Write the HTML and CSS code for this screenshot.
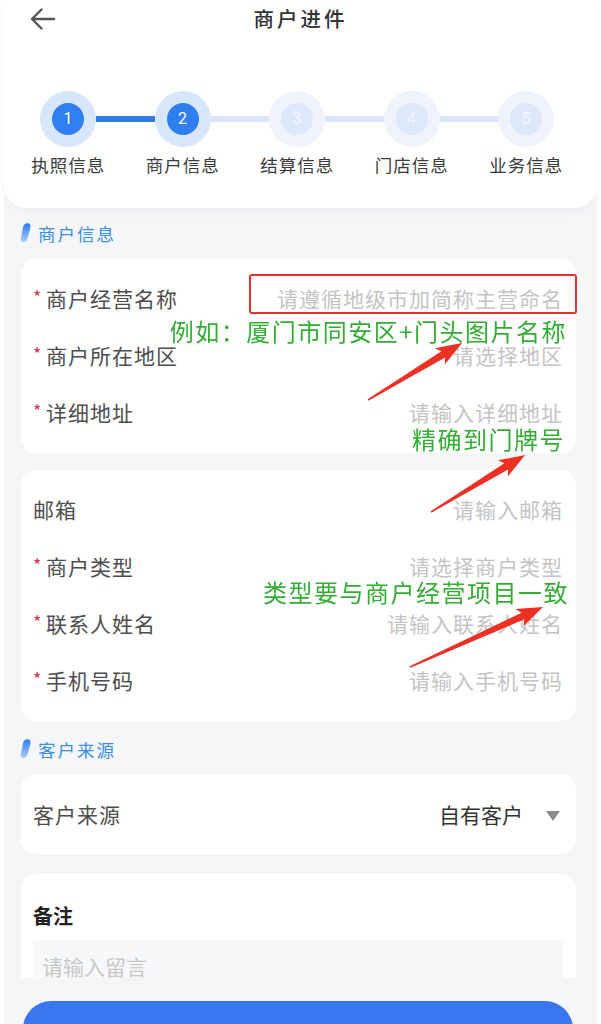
FILE: index.html
```html
<!DOCTYPE html>
<html lang="zh-CN">
<head>
<meta charset="utf-8">
<title>商户进件</title>
<link rel="stylesheet" href="styles.css">
</head>
<body>
<div class="page">
  <header class="header">
    <div class="topbar">
      <svg class="back" width="26" height="22" viewBox="0 0 26 22"><path d="M2 11H24M11.5 1.5L2 11L11.5 20.5" fill="none" stroke="#555" stroke-width="2.4" stroke-linecap="round" stroke-linejoin="round"/></svg>
      <div class="title">商户进件</div>
      <span></span>
    </div>
    <div class="steps">
      <div class="dot"><span>1</span></div>
      <div class="link on"></div>
      <div class="dot"><span>2</span></div>
      <div class="link"></div>
      <div class="dot off"><span>3</span></div>
      <div class="link"></div>
      <div class="dot off"><span>4</span></div>
      <div class="link"></div>
      <div class="dot off"><span>5</span></div>
    </div>
    <div class="labels">
      <span>执照信息</span><span>商户信息</span><span>结算信息</span><span>门店信息</span><span>业务信息</span>
    </div>
  </header>

  <main class="content">
    <div class="sec">
      <svg class="leaf" width="11" height="20" viewBox="0 0 11 20"><defs><linearGradient id="lg1" x1="0" y1="0" x2="0" y2="1"><stop offset="0" stop-color="#2f7cf0"/><stop offset="1" stop-color="#a9cbfb"/></linearGradient></defs><path d="M7.8 0.3C10.4 0.3 10.9 2.6 10.2 5.4L7.2 16.6C6.4 19.6 0.2 20.2 0.7 16.4L2.8 5C3.4 1.6 5.3 0.3 7.8 0.3Z" fill="url(#lg1)"/></svg>
      <span>商户信息</span>
    </div>
    <section class="card first">
      <div class="row"><span class="lab"><i>*</i>商户经营名称</span><span class="ph">请遵循地级市加简称主营命名</span></div>
      <div class="row"><span class="lab"><i>*</i>商户所在地区</span><span class="ph">请选择地区</span></div>
      <div class="row"><span class="lab"><i>*</i>详细地址</span><span class="ph">请输入详细地址</span></div>
      <div class="redbox"></div>
    </section>
    <section class="card">
      <div class="row"><span class="lab">邮箱</span><span class="ph">请输入邮箱</span></div>
      <div class="row"><span class="lab"><i>*</i>商户类型</span><span class="ph">请选择商户类型</span></div>
      <div class="row"><span class="lab"><i>*</i>联系人姓名</span><span class="ph">请输入联系人姓名</span></div>
      <div class="row"><span class="lab"><i>*</i>手机号码</span><span class="ph">请输入手机号码</span></div>
    </section>

    <div class="sec second">
      <svg class="leaf" width="11" height="20" viewBox="0 0 11 20"><defs><linearGradient id="lg2" x1="0" y1="0" x2="0" y2="1"><stop offset="0" stop-color="#2f7cf0"/><stop offset="1" stop-color="#a9cbfb"/></linearGradient></defs><path d="M7.8 0.3C10.4 0.3 10.9 2.6 10.2 5.4L7.2 16.6C6.4 19.6 0.2 20.2 0.7 16.4L2.8 5C3.4 1.6 5.3 0.3 7.8 0.3Z" fill="url(#lg2)"/></svg>
      <span>客户来源</span>
    </div>
    <section class="card single">
      <div class="row src"><span class="lab">客户来源</span><span class="val">自有客户<b class="tri"></b></span></div>
    </section>

    <section class="card memo">
      <div class="memo-title">备注</div>
      <div class="memo-box">请输入留言</div>
    </section>
  </main>

  <div class="bottombar"><div class="btn"></div></div>
</div>

<div class="notes">
  <span class="note n1">例如：厦门市同安区+门头图片名称</span>
  <span class="note n2">精确到门牌号</span>
  <span class="note n3">类型要与商户经营项目一致</span>
  <svg class="arrows" width="601" height="1024" viewBox="0 0 601 1024">
    <g fill="#ee2f24">
      <polygon transform="translate(368 400) rotate(-31.2)" points="0,-0.8 88,-3.6 84,-9.5 110,0 84,9.5 88,3.6 0,0.8"/>
      <polygon transform="translate(431 512) rotate(-31.2)" points="0,-0.8 88,-3.6 84,-9.5 110,0 84,9.5 88,3.6 0,0.8"/>
      <polygon transform="translate(410 667) rotate(-24.3)" points="0,-0.8 124,-3.6 120,-9.5 146,0 120,9.5 124,3.6 0,0.8"/>
    </g>
  </svg>
</div>
</body>
</html>
```

FILE: styles.css
```css
* { box-sizing: border-box; }

body {
  margin: 0;
  width: 601px;
  height: 1024px;
  overflow: hidden;
  position: relative;
  background: #fff;
  font-family: "Noto Sans CJK SC", "Noto Sans", sans-serif;
}

.page {
  margin: 0 4px;
  min-height: 1024px;
  background: #f5f6f8;
}

/* header */
.header {
  background: #fff;
  border-radius: 0 0 22px 22px;
  padding-bottom: 32px;
  box-shadow: 0 3px 8px rgba(40, 70, 130, 0.04);
}

.topbar {
  height: 36px;
  display: grid;
  grid-template-columns: 80px 1fr 80px;
  align-items: center;
}

.back {
  margin-left: 26px;
  margin-top: 2px;
}

.title {
  text-align: center;
  font-size: 20.5px;
  letter-spacing: 3px;
  color: #333;
  font-weight: 500;
  line-height: 36px;
}

.steps {
  display: flex;
  align-items: center;
  padding-left: 36px;
  margin-top: 55px;
}

.dot {
  flex: none;
  width: 56px;
  height: 56px;
  border-radius: 50%;
  background: #d7e6fb;
  display: flex;
  align-items: center;
  justify-content: center;
}

.dot span {
  width: 32px;
  height: 32px;
  border-radius: 50%;
  background: #2f7ff0;
  color: #fff;
  font-family: Roboto, "Noto Sans", sans-serif;
  font-size: 16px;
  line-height: 32px;
  text-align: center;
}

.dot.off { background: #eef3fc; }
.dot.off span { background: #dde8fa; color: #f3f7ff; }

.link {
  flex: none;
  width: 58.5px;
  height: 6px;
  background: #d8e5fa;
}

.link.on { background: #2b7de3; }

.labels {
  display: grid;
  grid-template-columns: repeat(5, 114.5px);
  padding-left: 7px;
  margin-top: 7px;
}

.labels span {
  text-align: center;
  font-size: 17.5px;
  letter-spacing: 1px;
  line-height: 22px;
  color: #3a3a3a;
}

/* content */
.content {
  padding: 0 21px 0 17px;
}

.sec {
  display: flex;
  align-items: center;
  gap: 7px;
  height: 22px;
  margin: 14px 0 15px -1px;
  color: #3a8ee6;
  font-size: 17.5px;
  letter-spacing: 2px;
}

.sec.second {
  margin-top: 10px;
  margin-bottom: 14px;
}

.leaf { flex: none; }

.card {
  position: relative;
  background: #fff;
  border-radius: 15px;
  padding: 10.5px 0 12.5px;
  margin-bottom: 17px;
}

.card.single {
  padding: 0;
  margin-bottom: 20px;
}

.row {
  height: 57px;
  display: flex;
  align-items: center;
  justify-content: space-between;
  padding: 0 14px 0 12px;
}

.lab {
  font-size: 21px;
  letter-spacing: 1px;
  color: #4d4d4d;
  display: flex;
  align-items: center;
}

.lab i {
  font-style: normal;
  color: #e0304e;
  font-size: 18px;
  width: 13px;
  margin-top: -4px;
}

.ph {
  font-size: 21px;
  letter-spacing: 1px;
  margin-right: -1px;
  color: #c4c4c4;
}

.redbox {
  position: absolute;
  top: 15px;
  right: -1px;
  width: 328px;
  height: 40px;
  border: 2.5px solid #e5322d;
  border-radius: 3px;
}

.row.src {
  height: 80px;
  padding: 0 16px 0 12px;
}

.val {
  display: flex;
  align-items: center;
  gap: 23px;
  font-size: 21px;
  color: #333;
}

.tri {
  width: 0;
  height: 0;
  border-left: 7px solid transparent;
  border-right: 7px solid transparent;
  border-top: 10px solid #8c8c8c;
  margin-top: 3px;
}

.memo {
  padding: 30px 13px 20px 12px;
}

.memo-title {
  font-size: 20px;
  font-weight: 700;
  line-height: 24px;
  color: #222;
}

.memo-box {
  margin-top: 12px;
  height: 110px;
  background: #f7f8fa;
  padding: 12px 9px;
  font-size: 21px;
  color: #c8c8c8;
  line-height: 28px;
}

.bottombar {
  position: fixed;
  left: 4px;
  right: 4px;
  bottom: 0;
  height: 46px;
  overflow: hidden;
  background: #f5f6f8;
  padding: 23px 24px 0 19px;
}

.btn {
  height: 56px;
  border-radius: 28px;
  background: #3a76ee;
}

/* annotations */
.notes {
  position: absolute;
  left: 0;
  top: 0;
  width: 601px;
  height: 1024px;
  pointer-events: none;
}

.note {
  position: absolute;
  font-size: 24px;
  letter-spacing: 1.5px;
  line-height: 30px;
  color: #33ad33;
  white-space: nowrap;
}

.n1 { top: 316px; right: 34px; }
.n2 { top: 424px; right: 36px; }
.n3 { top: 577px; right: 32px; }

.arrows {
  position: absolute;
  left: 0;
  top: 0;
}
```
